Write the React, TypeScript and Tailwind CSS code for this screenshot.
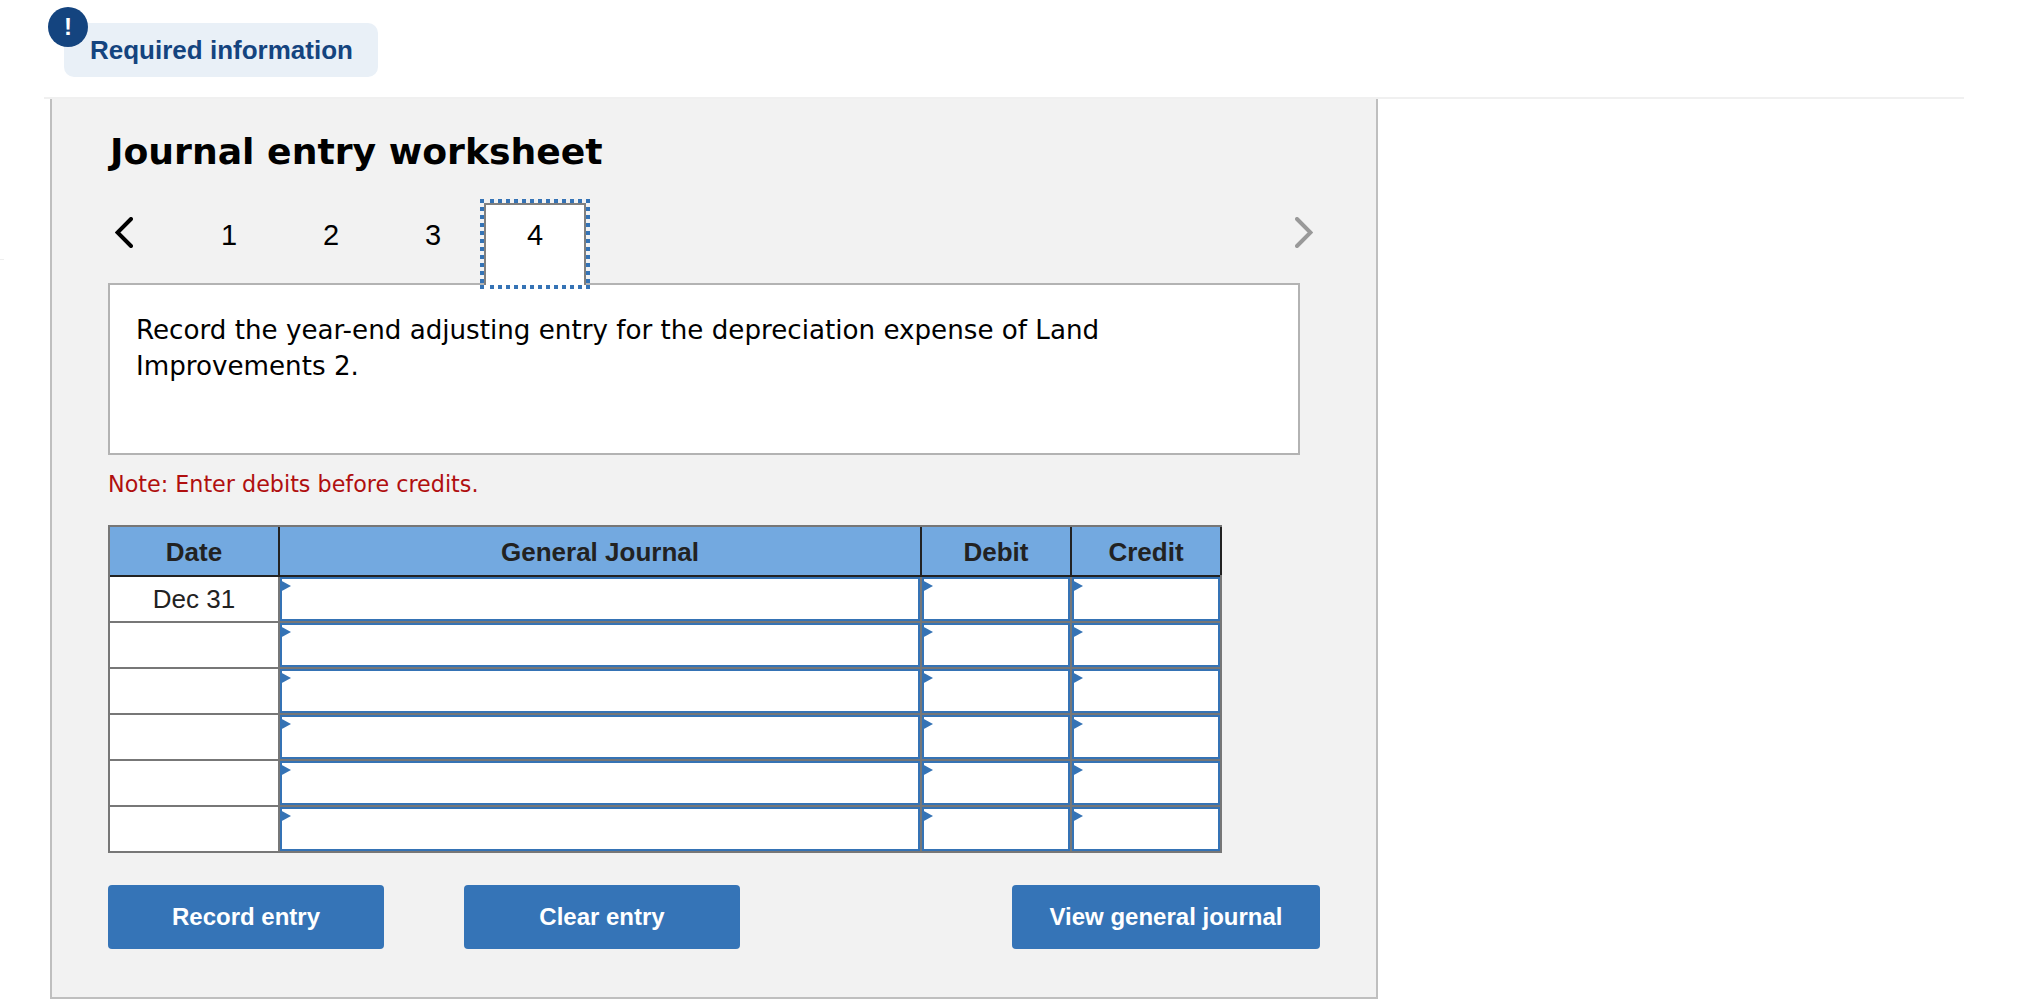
const rows = [0, 1, 2, 3, 4, 5];

function EntryCell({ width }: { width: string }) {
  return (
    <div className={`relative border-2 border-[#3573b5] bg-white ${width}`}>
      <input type="text" className="h-full w-full bg-white outline-none" />
      <span className="absolute -left-[2px] top-[1px] h-0 w-0 border-y-[6.5px] border-l-[11px] border-y-transparent border-l-[#3573b5]" />
    </div>
  );
}

export default function App() {
  return (
    <div className="relative h-[1004px] w-[2026px] overflow-hidden bg-white pt-[23px] font-['Liberation_Sans',Arial,sans-serif] text-black">
      <div className="absolute left-0 top-[259px] h-px w-[4px] bg-[#eeeeee]" />

      <div className="relative ml-[64px] flex h-[54px] w-[314px] items-center rounded-[10px] bg-[#e9f0f7] pl-[26px]">
        <span className="absolute -left-[16px] -top-[16px] flex h-[40px] w-[40px] items-center justify-center rounded-full bg-[#14447f] text-[24px] font-bold leading-none text-white">
          !
        </span>
        <span className="text-[26px] font-bold text-[#14447f]">Required information</span>
      </div>

      <div className="ml-[44px] mt-[20px] h-[2px] w-[1920px] bg-[#f0f0f0]" />

      <div className="ml-[50px] h-[900px] w-[1328px] border-x-2 border-b-2 border-[#bfbfbf] bg-[#f2f2f2] pl-[56px] pt-[31px]">
        <h1 className="ml-[2px] font-['DejaVu_Sans',Verdana,sans-serif] text-[36.2px] font-bold leading-[44px]">
          Journal entry worksheet
        </h1>

        <div className="relative z-10 mt-[25px] flex h-[90px] w-[1205px] items-start justify-between">
          <div className="flex items-start">
            <div className="w-[70px] pl-[7px] pt-[18px]">
              <svg width="18" height="31" viewBox="0 0 18 31" fill="none" stroke="#000000" strokeWidth="4" strokeLinecap="round" strokeLinejoin="miter">
                <polyline points="16,2 2.5,15.5 16,29" />
              </svg>
            </div>
            {["1", "2", "3"].map((n) => (
              <div key={n} className="h-[90px] w-[102px] pt-[20px] text-center text-[29px] leading-[32px]">
                {n}
              </div>
            ))}
            <div className="relative -ml-[4px] h-[90px] w-[110px] p-[4px]">
              <div className="h-full border-2 border-b-0 border-[#808080] bg-white pt-[14px] text-center text-[29px] leading-[32px]">
                4
              </div>
              <svg className="absolute left-0 top-0" width="110" height="90" viewBox="0 0 110 90" fill="none" stroke="#3573b5" strokeWidth="4" strokeDasharray="4 4">
                <path d="M10 2H110M10 88H110M2 0V84M108 8V84" />
                <path d="M0 2H4M0 88H4" strokeDasharray="none" />
              </svg>
            </div>
          </div>
          <div className="pt-[18px]">
            <svg width="18" height="31" viewBox="0 0 18 31" fill="none" stroke="#999999" strokeWidth="4" strokeLinecap="round" strokeLinejoin="miter">
              <polyline points="2,2 15.5,15.5 2,29" />
            </svg>
          </div>
        </div>

        <div className="-mt-[6px] h-[172px] w-[1192px] border-2 border-[#b3b3b3] bg-white pl-[26px] pt-[27px] font-['DejaVu_Sans',Verdana,sans-serif] text-[26.17px] leading-[36px]">
          Record the year-end adjusting entry for the depreciation expense of Land
          <br />
          Improvements 2.
        </div>

        <p className="mt-[14px] font-['DejaVu_Sans',Verdana,sans-serif] text-[22.25px] leading-[30px] text-[#b00f0f]">
          Note: Enter debits before credits.
        </p>

        <div className="mt-[26px] flex h-[328px] w-[1114px] flex-col border-2 border-[#777777] bg-[#777777]">
          <div className="flex h-[50px] border-b-2 border-[#222222] bg-[#73a9e0] text-[26px] font-bold leading-[50px] text-[#222222]">
            <div className="w-[170px] border-r-2 border-[#222222] text-center">Date</div>
            <div className="w-[642px] border-r-2 border-[#222222] text-center">General Journal</div>
            <div className="w-[150px] border-r-2 border-[#222222] text-center">Debit</div>
            <div className="relative -mr-[2px] w-[150px] border-r-2 border-[#222222] text-center">Credit</div>
          </div>
          <div className="flex flex-1 flex-col gap-y-[2px]">
            {rows.map((r) => (
              <div key={r} className="flex flex-1 gap-x-[2px]">
                <div className="w-[168px] bg-white text-center text-[26px] leading-[44px] text-[#222222]">
                  {r === 0 ? "Dec 31" : ""}
                </div>
                <EntryCell width="w-[640px]" />
                <EntryCell width="w-[148px]" />
                <EntryCell width="w-[148px]" />
              </div>
            ))}
          </div>
        </div>

        <div className="mt-[32px] flex">
          <button className="h-[64px] w-[276px] rounded-[4px] bg-[#3574b7] text-[24px] font-bold text-white">
            Record entry
          </button>
          <button className="ml-[80px] h-[64px] w-[276px] rounded-[4px] bg-[#3574b7] text-[24px] font-bold text-white">
            Clear entry
          </button>
          <button className="ml-[272px] h-[64px] w-[308px] rounded-[4px] bg-[#3574b7] text-[24px] font-bold text-white">
            View general journal
          </button>
        </div>
      </div>
    </div>
  );
}
